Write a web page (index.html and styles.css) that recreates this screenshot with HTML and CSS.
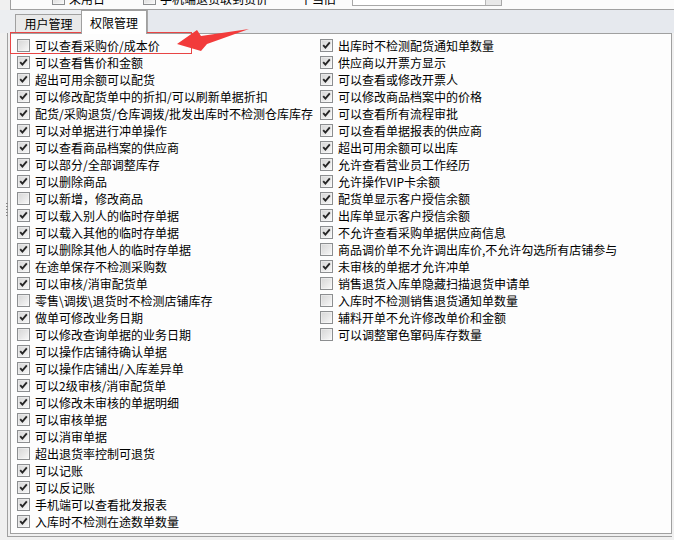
FILE: index.html
```html
<!DOCTYPE html>
<html lang="zh">
<head>
<meta charset="utf-8">
<title>权限管理</title>
<link rel="stylesheet" href="styles.css">
</head>
<body>
<div class="top">
  <div class="top-row">
    <span class="cb"></span><span class="top-text t1">采用日</span>
    <span class="cb"></span><span class="top-text t2">手机端退货取到货价</span>
    <span class="top-text t3">丅当旧</span>
    <span class="combo"><span class="combo-btn"></span></span>
  </div>
</div>
<div class="tabs">
  <div class="tab">用户管理</div>
  <div class="tab active">权限管理</div>
  <div class="tab-fill"></div>
</div>
<div class="frame">
  <div class="page">
    <div class="col left">
      <label class="row"><span class="cb"></span>可以查看采购价/成本价</label>
      <label class="row"><span class="cb on"></span>可以查看售价和金额</label>
      <label class="row"><span class="cb on"></span>超出可用余额可以配货</label>
      <label class="row"><span class="cb on"></span>可以修改配货单中的折扣/可以刷新单据折扣</label>
      <label class="row"><span class="cb on"></span>配货/采购退货/仓库调拨/批发出库时不检测仓库库存</label>
      <label class="row"><span class="cb on"></span>可以对单据进行冲单操作</label>
      <label class="row"><span class="cb on"></span>可以查看商品档案的供应商</label>
      <label class="row"><span class="cb on"></span>可以部分/全部调整库存</label>
      <label class="row"><span class="cb on"></span>可以删除商品</label>
      <label class="row"><span class="cb"></span>可以新增，修改商品</label>
      <label class="row"><span class="cb on"></span>可以载入别人的临时存单据</label>
      <label class="row"><span class="cb on"></span>可以载入其他的临时存单据</label>
      <label class="row"><span class="cb on"></span>可以删除其他人的临时存单据</label>
      <label class="row"><span class="cb on"></span>在途单保存不检测采购数</label>
      <label class="row"><span class="cb on"></span>可以审核/消审配货单</label>
      <label class="row"><span class="cb"></span>零售\调拨\退货时不检测店铺库存</label>
      <label class="row"><span class="cb on"></span>做单可修改业务日期</label>
      <label class="row"><span class="cb"></span>可以修改查询单据的业务日期</label>
      <label class="row"><span class="cb on"></span>可以操作店铺待确认单据</label>
      <label class="row"><span class="cb on"></span>可以操作店铺出/入库差异单</label>
      <label class="row"><span class="cb on"></span>可以2级审核/消审配货单</label>
      <label class="row"><span class="cb on"></span>可以修改未审核的单据明细</label>
      <label class="row"><span class="cb on"></span>可以审核单据</label>
      <label class="row"><span class="cb on"></span>可以消审单据</label>
      <label class="row"><span class="cb"></span>超出退货率控制可退货</label>
      <label class="row"><span class="cb on"></span>可以记账</label>
      <label class="row"><span class="cb on"></span>可以反记账</label>
      <label class="row"><span class="cb on"></span>手机端可以查看批发报表</label>
      <label class="row"><span class="cb on"></span>入库时不检测在途数单数量</label>
    </div>
    <div class="col right">
      <label class="row"><span class="cb on"></span>出库时不检测配货通知单数量</label>
      <label class="row"><span class="cb on"></span>供应商以开票方显示</label>
      <label class="row"><span class="cb on"></span>可以查看或修改开票人</label>
      <label class="row"><span class="cb on"></span>可以修改商品档案中的价格</label>
      <label class="row"><span class="cb on"></span>可以查看所有流程审批</label>
      <label class="row"><span class="cb on"></span>可以查看单据报表的供应商</label>
      <label class="row"><span class="cb on"></span>超出可用余额可以出库</label>
      <label class="row"><span class="cb on"></span>允许查看营业员工作经历</label>
      <label class="row"><span class="cb on"></span>允许操作VIP卡余额</label>
      <label class="row"><span class="cb on"></span>配货单显示客户授信余额</label>
      <label class="row"><span class="cb on"></span>出库单显示客户授信余额</label>
      <label class="row"><span class="cb on"></span>不允许查看采购单据供应商信息</label>
      <label class="row"><span class="cb"></span>商品调价单不允许调出库价,不允许勾选所有店铺参与</label>
      <label class="row"><span class="cb on"></span>未审核的单据才允许冲单</label>
      <label class="row"><span class="cb"></span>销售退货入库单隐藏扫描退货申请单</label>
      <label class="row"><span class="cb"></span>入库时不检测销售退货通知单数量</label>
      <label class="row"><span class="cb"></span>辅料开单不允许修改单价和金额</label>
      <label class="row"><span class="cb"></span>可以调整窜色窜码库存数量</label>
    </div>
  </div>
</div>
<div class="grip"></div>
<div class="highlight"></div>
<svg class="arrow" width="674" height="60" viewBox="0 0 674 60" aria-hidden="true">
  <polygon points="177,44 197,30 201,36 249,29 207,44 201,51" fill="#f23b3b"/>
</svg>
</body>
</html>
```
FILE: styles.css
```css
* { box-sizing: border-box; }

html, body {
  margin: 0;
  padding: 0;
}

body {
  width: 674px;
  height: 540px;
  overflow: hidden;
  position: relative;
  background: #f0f0f0;
  font-family: "Noto Sans CJK SC", "Noto Sans", sans-serif;
  font-size: 12px;
  color: #000;
}

/* top cut-off strip */
.top {
  height: 10px;
  margin-left: 10px;
  border-left: 1px solid #a0a0a0;
  border-bottom: 1px solid #a0a0a0;
  background: #fbfbfb;
  overflow: hidden;
}

.top-row {
  display: flex;
  align-items: center;
  height: 13px;
  margin-top: -8px;
  padding-left: 41px;
  line-height: 13px;
  white-space: nowrap;
}

.top-text { margin-left: 4px; }
.t1 { width: 74px; }
.t2 { width: 136px; }
.t3 { width: 52px; }

.combo {
  display: flex;
  justify-content: flex-end;
  align-self: flex-start;
  width: 150px;
  height: 20px;
  margin-top: -6px;
  border: 1px solid #a8a8a8;
  background: #fff;
}

.combo-btn {
  width: 16px;
  border-left: 1px solid #b8b8b8;
  background: #e8e8e8;
}

/* tabs */
.tabs {
  display: flex;
  align-items: flex-end;
  height: 23px;
  padding-left: 15px;
  background: #eceef1;
}

.tab {
  width: 67px;
  height: 19px;
  border: 1px solid #a0a0a0;
  border-bottom: none;
  background: #e9e9e9;
  text-align: center;
  line-height: 18px;
  font-size: 12px;
}

.tab.active {
  width: 66px;
  height: 24px;
  margin-bottom: -1px;
  margin-left: -1px;
  background: #fff;
  line-height: 22px;
  padding-top: 1px;
  position: relative;
  z-index: 1;
}

.tab-fill {
  flex: 1;
  align-self: stretch;
  background: #e6e9ee;
  border-left: 1px solid #a8a8a8;
}

/* page */
.frame {
  margin-left: 7px;
  width: 665px;
  border-left: 1px solid #a0a0a0;
  border-bottom: 1px solid #a0a0a0;
  padding: 0 0 2px 2px;
}

.page {
  display: flex;
  width: 662px;
  height: 501px;
  border: 1px solid #a0a0a0;
  background: #fdfdfd;
  padding: 3px 0 0 6px;
}

.col {
  display: flex;
  flex-direction: column;
}

.col.left { width: 303px; }

.row {
  display: flex;
  align-items: center;
  gap: 5px;
  height: 17px;
  white-space: nowrap;
  line-height: 17px;
}

.cb {
  flex: none;
  width: 13px;
  height: 13px;
  border: 1px solid #8c8e90;
  background: linear-gradient(135deg, #d6d6d6 0%, #e6e6e6 50%, #f9f9f9 100%);
  box-shadow: inset 0 0 0 1px rgba(255,255,255,0.35);
}

.cb.on {
  background-image:
    url("data:image/svg+xml;utf8,<svg xmlns='http://www.w3.org/2000/svg' width='11' height='11' viewBox='0 0 11 11'><polyline points='2.2,5.2 4.4,7.6 8.8,2.4' fill='none' stroke='%23262626' stroke-width='1.9'/></svg>"),
    linear-gradient(135deg, #d6d6d6 0%, #e6e6e6 50%, #f9f9f9 100%);
  background-repeat: no-repeat;
  background-position: center, 0 0;
}

/* overlays */
.grip {
  position: absolute;
  left: 6px;
  top: 203px;
  width: 2px;
  height: 15px;
  background: repeating-linear-gradient(to bottom, #8a8a8a 0 1px, transparent 1px 3px);
}

.highlight {
  position: absolute;
  left: 10px;
  top: 32px;
  width: 182px;
  height: 22px;
  border: 1px solid #e84545;
}

.arrow {
  position: absolute;
  left: 0;
  top: 0;
}
```
